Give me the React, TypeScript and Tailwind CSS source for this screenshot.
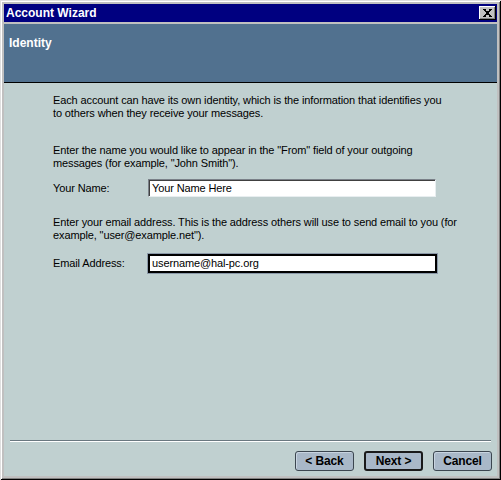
import React from 'react';

const font = { fontFamily: '"Liberation Sans", Arial, sans-serif' };

function CloseButton() {
  return (
    <div className="w-[17px] h-[14px] bg-[#c0c0c0] shadow-[inset_-1px_-1px_#000,inset_1px_1px_#fff,inset_-2px_-2px_#808080] flex items-center justify-center pb-[1px]">
      <svg width="9" height="8" viewBox="0 0 9 8" shapeRendering="crispEdges">
        <path
          d="M0 0h3v1h-3zM6 0h3v1h-3zM1 1h2v1h-2zM6 1h2v1h-2zM2 2h5v1h-5zM3 3h3v1h-3zM3 4h3v1h-3zM2 5h5v1h-5zM1 6h2v1h-2zM6 6h2v1h-2zM0 7h3v1h-3zM6 7h3v1h-3z"
          fill="#000"
        />
      </svg>
    </div>
  );
}

function WizardButton({ label, primary }: { label: string; primary?: boolean }) {
  return (
    <button
      className={`w-[59px] h-[20px] rounded-[3px] bg-[#a9b8c8] text-[12px] font-bold text-black flex items-center justify-center ${
        primary ? 'border-2 border-[#1a1a1a]' : 'border border-[#3c4650] shadow-[inset_1px_1px_#c8d4e0]'
      }`}
    >
      {label}
    </button>
  );
}

export default function App() {
  return (
    <div
      className="w-[501px] h-[480px] bg-[#c0c0c0] p-[4px] flex flex-col shadow-[inset_1px_1px_#dfdfdf,inset_-1px_-1px_#000,inset_2px_2px_#fff,inset_-2px_-2px_#808080]"
      style={font}
    >
      {/* title bar */}
      <div className="h-[18px] bg-[#000080] flex items-center justify-between pl-[2px] pr-[1px]">
        <span className="text-white font-bold text-[12px]">Account Wizard</span>
        <CloseButton />
      </div>

      <div className="flex-1 mt-[2px] flex flex-col bg-[#c0d0d0]">
        {/* page header */}
        <div className="h-[59px] bg-[#51718f] border-b border-black pl-[5px] pt-[6px]">
          <span className="text-white font-bold text-[12px]">Identity</span>
        </div>

        <div className="flex-1 flex flex-col text-[11px] leading-[13px] tracking-[-0.12px] text-black">
          <div className="pl-[49px] pt-[11px] flex flex-col whitespace-nowrap">
            <p>
              Each account can have its own identity, which is the information that identifies you
              <br />
              to others when they receive your messages.
            </p>
            <p className="mt-[24px]">
              Enter the name you would like to appear in the "From" field of your outgoing
              <br />
              messages (for example, "John Smith").
            </p>
            <div className="mt-[9px] flex items-center">
              <span className="w-[95px]">Your Name:</span>
              <div className="w-[288px] h-[18px] bg-white border border-[#7a8088] border-b-[#e8eef0] border-r-[#e8eef0] shadow-[inset_1px_1px_#404040] flex items-center pl-[3px]">
                Your Name Here
              </div>
            </div>
            <p className="mt-[19px]">
              Enter your email address. This is the address others will use to send email to you (for
              <br />
              example, "user@example.net").
            </p>
            <div className="mt-[12px] flex items-center">
              <span className="w-[95px]">Email Address:</span>
              <div className="w-[289px] h-[19px] bg-white border-2 border-black shadow-[0_0_0_1px_#8a98a8] flex items-center pl-[2px]">
                username@hal-pc.org
              </div>
            </div>
          </div>

          <div className="mt-auto mx-[6px] h-[2px] border-t border-[#6a7880] border-b border-b-white" />

          <div className="flex justify-end gap-[10px] pr-[5px] pt-[9px] pb-[5px]">
            <WizardButton label="< Back" />
            <WizardButton label="Next >" primary />
            <WizardButton label="Cancel" />
          </div>
        </div>
      </div>
    </div>
  );
}
